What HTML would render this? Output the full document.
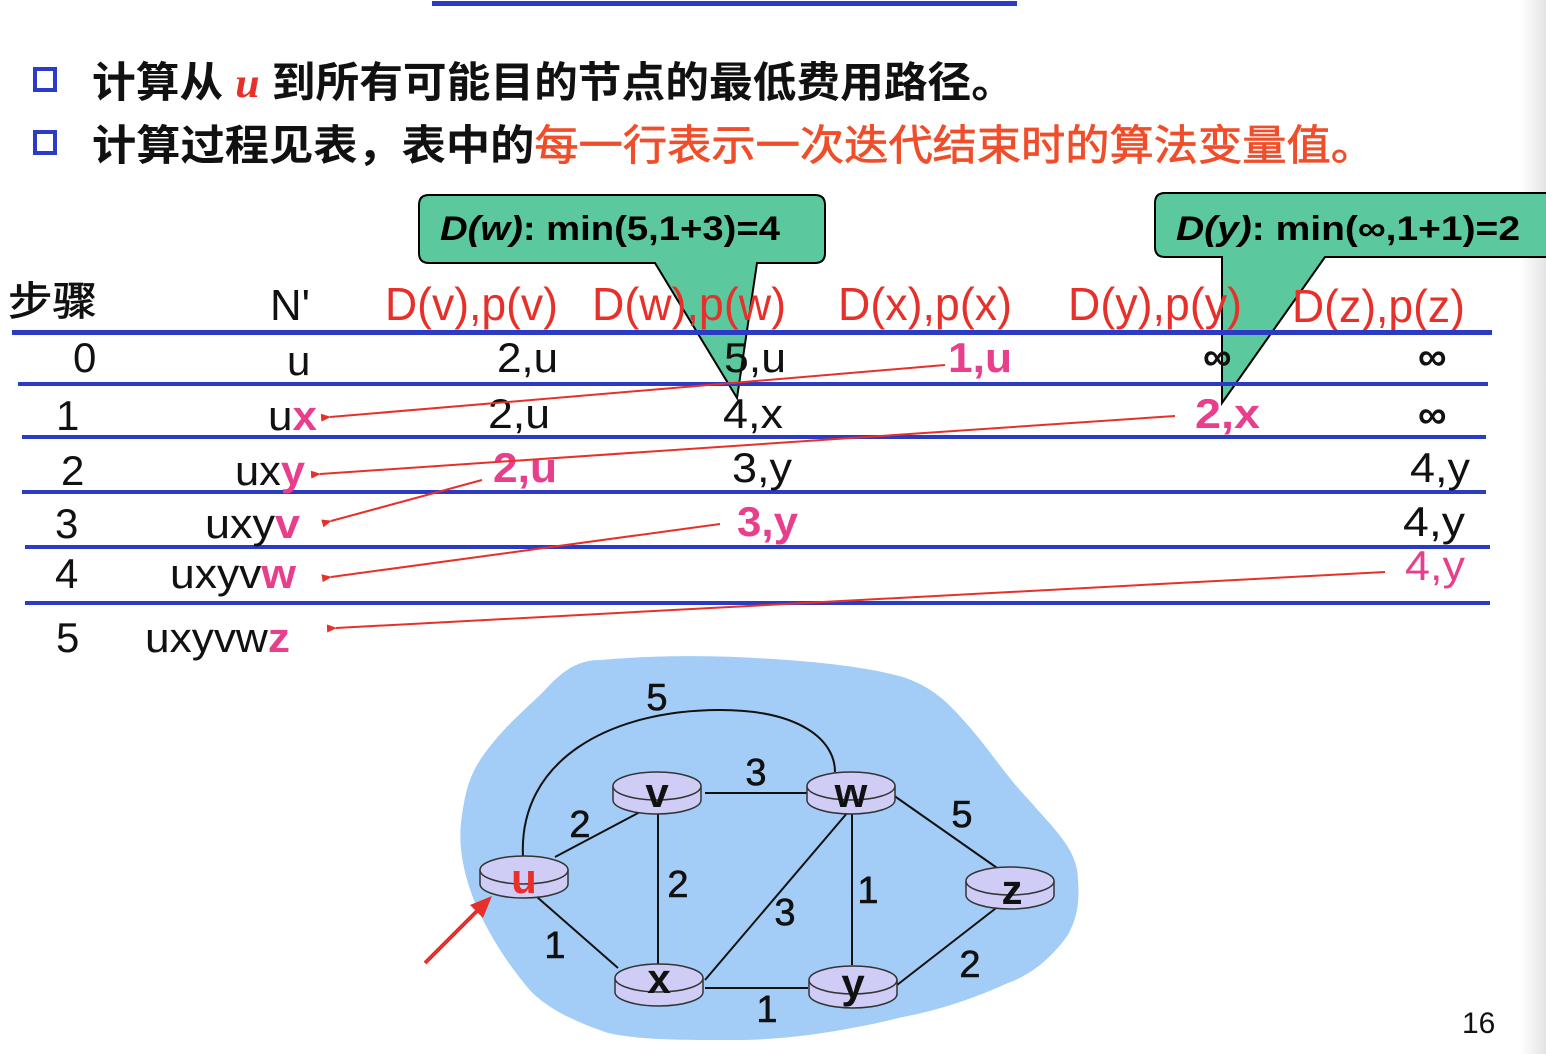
<!DOCTYPE html>
<html><head><meta charset="utf-8"><style>
html,body{margin:0;padding:0;background:#fff;width:1546px;height:1054px;overflow:hidden}
svg{display:block}
.t{font-family:"Liberation Sans","Noto Sans CJK SC",sans-serif}
</style></head><body>
<svg width="1546" height="1054" viewBox="0 0 1546 1054" xmlns="http://www.w3.org/2000/svg" class="t">
<defs>
<marker id="ah" markerWidth="10" markerHeight="8" refX="1" refY="4" orient="auto-start-reverse" markerUnits="userSpaceOnUse">
<path d="M10,0 L0,4 L10,8 Z" fill="#e8302a"/></marker>
<linearGradient id="edge" x1="0" x2="1"><stop offset="0" stop-color="#fff"/><stop offset="1" stop-color="#e4e4e4"/></linearGradient>
</defs>
<rect x="1520" y="0" width="26" height="1054" fill="url(#edge)"/>
<rect x="432" y="1" width="585" height="5" fill="#2b3bc4"/>
<rect x="37" y="71" width="20" height="21" fill="#1a2590"/>
<rect x="35" y="69" width="20" height="21" fill="#fff" stroke="#2b3bc4" stroke-width="4"/>
<rect x="37" y="134" width="20" height="21" fill="#1a2590"/>
<rect x="35" y="132" width="20" height="21" fill="#fff" stroke="#2b3bc4" stroke-width="4"/>
<text x="92" y="97" font-size="42" font-weight="bold" fill="#111" textLength="923" lengthAdjust="spacingAndGlyphs">计算从 <tspan fill="#e8302a" font-style="italic" font-family="Liberation Serif">u</tspan> 到所有可能目的节点的最低费用路径。</text>
<text x="92" y="160" font-size="42" font-weight="bold" fill="#111" textLength="1283" lengthAdjust="spacingAndGlyphs">计算过程见表，表中的<tspan fill="#f04e2a" font-weight="normal" stroke="#f04e2a" stroke-width="0.8">每一行表示一次迭代结束时的算法变量值。</tspan></text>

<path d="M429,195 H815 Q825,195 825,205 V253 Q825,263 815,263 H757 L737,398 L655,263 H429 Q419,263 419,253 V205 Q419,195 429,195 Z" fill="#5bc89e" stroke="#000" stroke-width="2"/>
<path d="M1165,193 H1550 V257 H1325 L1222,403 V257 H1165 Q1155,257 1155,247 V203 Q1155,193 1165,193 Z" fill="#5bc89e" stroke="#000" stroke-width="2"/>
<text x="440" y="240" font-size="34" font-weight="bold" fill="#000" textLength="340" lengthAdjust="spacingAndGlyphs"><tspan font-style="italic">D(w)</tspan>:  min(5,1+3)=4</text>
<text x="1176" y="240" font-size="34" font-weight="bold" fill="#000" textLength="344" lengthAdjust="spacingAndGlyphs"><tspan font-style="italic">D(y)</tspan>:  min(∞,1+1)=2</text>

<text x="8" y="315" font-size="40" fill="#111" stroke="#111" stroke-width="0.8" textLength="89" lengthAdjust="spacingAndGlyphs">步骤</text>
<text x="270" y="320" font-size="44" fill="#111" textLength="40" lengthAdjust="spacingAndGlyphs">N'</text>
<g fill="#e8302a" font-size="46">
<text x="385" y="320" textLength="173" lengthAdjust="spacingAndGlyphs">D(v),p(v)</text>
<text x="592" y="320" textLength="194" lengthAdjust="spacingAndGlyphs">D(w),p(w)</text>
<text x="838" y="320" textLength="174" lengthAdjust="spacingAndGlyphs">D(x),p(x)</text>
<text x="1068" y="320" textLength="174" lengthAdjust="spacingAndGlyphs">D(y),p(y)</text>
<text x="1292" y="322" textLength="173" lengthAdjust="spacingAndGlyphs">D(z),p(z)</text>
</g>
<g fill="#2b3bc4">
<rect x="12" y="330" width="1480" height="5"/>
<rect x="18" y="382" width="1470" height="4"/>
<rect x="22" y="435" width="1464" height="4"/>
<rect x="22" y="490" width="1464" height="4"/>
<rect x="25" y="545" width="1465" height="4"/>
<rect x="25" y="601" width="1465" height="4"/>
</g>

<g font-size="42" fill="#111">
<text x="73" y="372">0</text>
<text x="287" y="375">u</text>
<text x="497" y="372" textLength="61" lengthAdjust="spacingAndGlyphs">2,u</text>
<text x="724" y="372" textLength="62" lengthAdjust="spacingAndGlyphs">5,u</text>
<text x="1203" y="370" font-weight="bold" font-size="40">∞</text>
<text x="1418" y="370" font-weight="bold" font-size="40">∞</text>

<text x="56" y="430">1</text>
<text x="268" y="430" textLength="49" lengthAdjust="spacingAndGlyphs">u<tspan fill="#e83e8c" font-weight="bold">x</tspan></text>
<text x="488" y="428" textLength="62" lengthAdjust="spacingAndGlyphs">2,u</text>
<text x="723" y="428" textLength="60" lengthAdjust="spacingAndGlyphs">4,x</text>
<text x="1418" y="428" font-weight="bold" font-size="40">∞</text>

<text x="61" y="485">2</text>
<text x="235" y="485" textLength="70" lengthAdjust="spacingAndGlyphs">ux<tspan fill="#e83e8c" font-weight="bold">y</tspan></text>
<text x="732" y="482" textLength="60" lengthAdjust="spacingAndGlyphs">3,y</text>
<text x="1410" y="482" textLength="60" lengthAdjust="spacingAndGlyphs">4,y</text>

<text x="55" y="538">3</text>
<text x="205" y="538" textLength="95" lengthAdjust="spacingAndGlyphs">uxy<tspan fill="#e83e8c" font-weight="bold">v</tspan></text>
<text x="1403" y="536" textLength="62" lengthAdjust="spacingAndGlyphs">4,y</text>

<text x="55" y="588">4</text>
<text x="170" y="588" textLength="126" lengthAdjust="spacingAndGlyphs">uxyv<tspan fill="#e83e8c" font-weight="bold">w</tspan></text>

<text x="56" y="652">5</text>
<text x="145" y="652" textLength="145" lengthAdjust="spacingAndGlyphs">uxyvw<tspan fill="#e83e8c" font-weight="bold">z</tspan></text>
</g>
<g fill="#e83e8c" font-size="42" font-weight="bold">
<text x="948" y="372" textLength="64" lengthAdjust="spacingAndGlyphs">1,u</text>
<text x="1195" y="428" textLength="65" lengthAdjust="spacingAndGlyphs">2,x</text>
<text x="493" y="482" textLength="64" lengthAdjust="spacingAndGlyphs">2,u</text>
<text x="737" y="536" textLength="61" lengthAdjust="spacingAndGlyphs">3,y</text>
<text x="1405" y="580" font-weight="normal" textLength="60" lengthAdjust="spacingAndGlyphs">4,y</text>
</g>

<g stroke="#e8302a" stroke-width="2" fill="none">
<line x1="945" y1="365" x2="330" y2="417" marker-end="url(#ah)"/>
<line x1="1175" y1="416" x2="320" y2="474" marker-end="url(#ah)"/>
<line x1="482" y1="480" x2="331" y2="521" marker-end="url(#ah)"/>
<line x1="720" y1="524" x2="331" y2="577" marker-end="url(#ah)"/>
<line x1="1385" y1="572" x2="336" y2="628" marker-end="url(#ah)"/>
</g>

<path d="M461,823 C465,790 470,775 482,757 C505,725 525,710 545,690 C565,668 580,660 600,660 C660,655 700,656 735,657 C800,660 860,665 903,677 C935,688 950,705 966,723 C990,750 1005,775 1029,800 C1055,830 1078,850 1078,880 C1080,905 1076,920 1068,935 C1050,960 1030,975 1008,983 C975,998 940,1010 903,1017 C850,1030 790,1040 735,1040 C680,1040 640,1040 608,1033 C570,1020 540,1005 524,983 C505,960 490,935 478,910 C465,880 458,850 461,823 Z" fill="#a3cdf7"/>
<g stroke="#111" stroke-width="2" fill="none">
<path d="M523,857 C518,760 610,710 720,710 C800,710 835,740 835,772"/>
<line x1="555" y1="857" x2="640" y2="812"/>
<line x1="705" y1="793" x2="808" y2="793"/>
<line x1="658" y1="812" x2="658" y2="965"/>
<line x1="848" y1="812" x2="705" y2="980"/>
<line x1="852" y1="812" x2="852" y2="965"/>
<line x1="893" y1="795" x2="1000" y2="870"/>
<line x1="1000" y1="905" x2="897" y2="985"/>
<line x1="537" y1="897" x2="618" y2="968"/>
<line x1="705" y1="988" x2="808" y2="988"/>
</g>
<g stroke="#333" stroke-width="1.5" fill="#cfcdf6">
<g transform="translate(657,793)"><path d="M-44,-7 V7 A44,14 0 0 0 44,7 V-7"/><ellipse cx="0" cy="-7" rx="44" ry="14"/></g>
<g transform="translate(851,793)"><path d="M-44,-7 V7 A44,14 0 0 0 44,7 V-7"/><ellipse cx="0" cy="-7" rx="44" ry="14"/></g>
<g transform="translate(524,877)"><path d="M-44,-7 V7 A44,14 0 0 0 44,7 V-7"/><ellipse cx="0" cy="-7" rx="44" ry="14"/></g>
<g transform="translate(1010,888)"><path d="M-44,-7 V7 A44,14 0 0 0 44,7 V-7"/><ellipse cx="0" cy="-7" rx="44" ry="14"/></g>
<g transform="translate(659,985)"><path d="M-44,-7 V7 A44,14 0 0 0 44,7 V-7"/><ellipse cx="0" cy="-7" rx="44" ry="14"/></g>
<g transform="translate(853,987)"><path d="M-44,-7 V7 A44,14 0 0 0 44,7 V-7"/><ellipse cx="0" cy="-7" rx="44" ry="14"/></g>
</g>
<g font-size="42" font-weight="bold" text-anchor="middle" fill="#111">
<text x="657" y="807">v</text>
<text x="851" y="807">w</text>
<text x="524" y="893" fill="#e8302a">u</text>
<text x="1012" y="904">z</text>
<text x="659" y="993">x</text>
<text x="853" y="998">y</text>
</g>
<g font-size="38" text-anchor="middle" fill="#111" stroke="#111" stroke-width="0.6">
<text x="657" y="710">5</text>
<text x="756" y="785">3</text>
<text x="580" y="837">2</text>
<text x="678" y="897">2</text>
<text x="962" y="827">5</text>
<text x="868" y="903">1</text>
<text x="785" y="925">3</text>
<text x="555" y="958">1</text>
<text x="970" y="977">2</text>
<text x="767" y="1022">1</text>
</g>
<line x1="425" y1="963" x2="483" y2="905" stroke="#e8302a" stroke-width="4"/>
<path d="M492,896 L470,905 L483,918 Z" fill="#e8302a"/>
<text x="1462" y="1033" font-size="30" fill="#111">16</text>
</svg>
</body></html>
